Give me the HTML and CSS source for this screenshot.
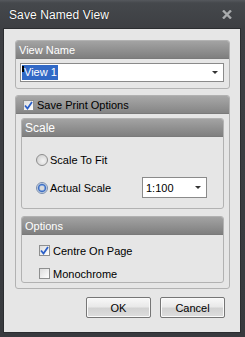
FILE: index.html
```html
<!DOCTYPE html>
<html>
<head>
<meta charset="utf-8">
<link rel="stylesheet" href="styles.css">
</head>
<body>
<div class="window">
  <div class="titlebar">
    <span class="title">Save Named View</span>
    <svg class="close" width="10" height="9" viewBox="0 0 10 9"><path d="M1 0.5 L9 8.5 M9 0.5 L1 8.5" stroke="#a9abad" stroke-width="2.4"/></svg>
  </div>
  <div class="client">
    <div class="group g-name">
      <div class="ghead">View Name</div>
      <div class="gbody name-body">
        <div class="combo">
          <span class="sel"><span class="caret"></span>View 1</span>
          <span class="arrow"></span>
        </div>
      </div>
    </div>
    <div class="group g-print">
      <div class="ghead"><span class="cb checked"><svg width="9" height="9" viewBox="0 0 9 9"><path d="M1 4.5 L3.5 7.5 L8 1" stroke="#2a5fc8" stroke-width="1.8" fill="none"/></svg></span>Save Print Options</div>
      <div class="gbody print-body">
        <div class="group g-scale">
          <div class="ghead">Scale</div>
          <div class="gbody scale-body">
            <div class="row r1"><span class="radio"></span>Scale To Fit</div>
            <div class="row r2"><span class="radio on"></span>Actual Scale<div class="combo small"><span class="val">1:100</span><span class="arrow"></span></div></div>
          </div>
        </div>
        <div class="group g-opts">
          <div class="ghead">Options</div>
          <div class="gbody opts-body">
            <div class="row o1"><span class="cb checked"><svg width="9" height="9" viewBox="0 0 9 9"><path d="M1 4.5 L3.5 7.5 L8 1" stroke="#2a5fc8" stroke-width="1.8" fill="none"/></svg></span>Centre On Page</div>
            <div class="row o2"><span class="cb"></span>Monochrome</div>
          </div>
        </div>
      </div>
    </div>
    <div class="buttons">
      <button class="btn">OK</button>
      <button class="btn">Cancel</button>
    </div>
  </div>
</div>
</body>
</html>
```
FILE: styles.css
```css
html, body { margin: 0; padding: 0; }
body {
  width: 245px; height: 337px; overflow: hidden;
  font-family: "Liberation Sans", Arial, sans-serif;
  font-size: 11px; color: #000;
  background: #3b3d41;
}
.window {
  width: 245px; height: 337px; box-sizing: border-box;
  background: linear-gradient(#55585d 0px, #45484c 3px, #3d3f43 28px, #383a3e 100%);
  padding: 0 4px 4px 3px;
  display: flex; flex-direction: column;
}
.titlebar {
  height: 28px; display: flex; align-items: center; justify-content: space-between;
  padding: 0 9px 0 6px; flex: none;
}
.title {
  color: #fff; font-size: 12px; letter-spacing: 0.1px;
  text-shadow: 0 0 1px #000; padding-top: 2px;
}
.client {
  flex: 1; background: #e6e6e6;
  border: 1px solid #2b2d30;
  box-sizing: border-box;
  padding: 11px 10px 0 11px;
  display: flex; flex-direction: column;
}
.group {
  border: 1px solid #b2b2b2; border-radius: 3px; box-sizing: border-box;
  overflow: hidden; background: #e6e6e6;
}
.ghead {
  height: 18px; box-sizing: border-box;
  background: linear-gradient(#a3a3a3, #7f7f7f);
  border-bottom: 1px solid #7a7a7a;
  color: #fff; font-size: 11px;
  display: flex; align-items: center; padding-left: 3px; padding-top: 1px;
}
.g-name { height: 49px; }
.name-body { padding: 4px 5px 0 4px; }
.combo {
  height: 19px; box-sizing: border-box; background: #fff;
  border: 1px solid #8a8a8a;
  display: flex; align-items: center; justify-content: space-between;
  font-size: 11px;
}
.sel {
  background: #3169c6; color: #fff; height: 15px; line-height: 15px;
  padding: 0 1px 0 0; margin-left: 1px;
}
.caret {
  display: inline-block; width: 2px; height: 6px; background: #000;
  vertical-align: top; margin-top: 1px;
}
.arrow {
  width: 0; height: 0; border-left: 3px solid transparent; border-right: 3px solid transparent;
  border-top: 3px solid #333; margin-right: 5px;
}
.g-print { margin-top: 6px; height: 194px; }
.g-print > .ghead { background: linear-gradient(#a8a8a8, #858585); color: #000; padding-left: 7px; }
.cb {
  width: 9px; height: 9px; box-sizing: content-box;
  border: 1px solid #8e8f8f; background: linear-gradient(135deg, #dcdcdc, #fff);
  display: inline-flex; align-items: center; justify-content: center;
  margin-right: 3px; flex: none;
}
.cb svg { display: block; }
.print-body { padding: 4px 5px 0 5px; display: flex; flex-direction: column; }
.g-scale { height: 91px; }
.g-scale .ghead, .g-opts .ghead { color: #fff; padding-left: 3px; }
.g-scale .ghead { font-size: 12px; }
.row { display: flex; align-items: center; font-size: 11px; }
.r1 { padding: 16px 0 0 14px; height: 14px; }
.r2 { padding: 0 0 0 14px; height: 21px; margin-top: 10px; }
.radio {
  width: 12px; height: 12px; border-radius: 50%; box-sizing: border-box;
  border: 1px solid #8d8d8d; margin-right: 2px;
  background: radial-gradient(circle at 60% 60%, #f4f4f4 0, #d6d6d6 70%);
  flex: none;
}
.radio.on {
  border-color: #7b8fae;
  background: radial-gradient(circle, #dadada 0, #dadada 2px, #7aa0dd 2.6px, #3b6cc0 3.6px, #d5dde9 4.8px);
}
.combo.small { width: 65px; height: 21px; margin-left: auto; margin-right: 16px; }
.val { padding-left: 3px; }
.g-opts { margin-top: 7px; height: 67px; }
.o1 { padding: 10px 0 0 17px; height: 11px; }
.o2 { padding: 12px 0 0 17px; height: 11px; }
.buttons {
  display: flex; justify-content: flex-end; gap: 9px; margin-top: 8px; padding-right: 5px;
}
.btn {
  width: 65px; height: 21px; padding: 0; margin: 0;
  border: 1px solid #767676; border-radius: 2px;
  background: linear-gradient(#f8f8f8 0, #e9e9e9 45%, #d2d2d2 55%, #dedede 100%);
  font-family: "Liberation Sans", Arial, sans-serif; font-size: 11px; color: #000;
  box-shadow: inset 0 0 0 1px #fafafa;
}
```
